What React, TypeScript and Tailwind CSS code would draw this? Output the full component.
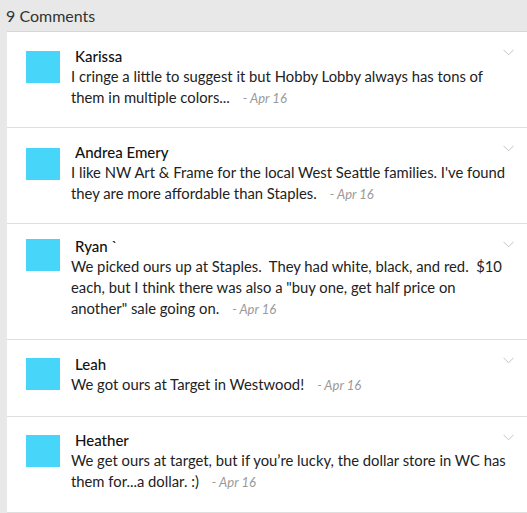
import React from "react";

type C = {
  name: string;
  lines: string[];
  pt: string;
  pb: string;
  am: string;
};

const comments: C[] = [
  {
    name: "Karissa",
    lines: [
      "I cringe a little to suggest it but Hobby Lobby always has tons of",
      "them in multiple colors...",
    ],
    pt: "pt-[14px]",
    pb: "pb-[19px]",
    am: "mt-[5px]",
  },
  {
    name: "Andrea Emery",
    lines: [
      "I like NW Art & Frame for the local West Seattle families. I've found",
      "they are more affordable than Staples.",
    ],
    pt: "pt-[14px]",
    pb: "pb-[19px]",
    am: "mt-[6px]",
  },
  {
    name: "Ryan `",
    lines: [
      "We picked ours up at Staples.\u00a0 They had white, black, and red.\u00a0 $10",
      'each, but I think there was also a "buy one, get half price on',
      'another" sale going on.',
    ],
    pt: "pt-[12px]",
    pb: "pb-[20px]",
    am: "mt-[3px]",
  },
  {
    name: "Leah",
    lines: ["We got ours at Target in Westwood!"],
    pt: "pt-[14px]",
    pb: "pb-[21px]",
    am: "mt-[4px]",
  },
  {
    name: "Heather",
    lines: [
      "We get ours at target, but if you\u2019re lucky, the dollar store in WC has",
      "them for...a dollar. :)",
    ],
    pt: "pt-[13px]",
    pb: "pb-[20px]",
    am: "mt-[5px]",
  },
];

function Chevron() {
  return (
    <svg
      className="absolute top-[17px] right-[13px]"
      width="11"
      height="7"
      viewBox="0 0 11 7"
      fill="none"
    >
      <path d="M0.5 0.8 L5.5 5.8 L10.5 0.8" stroke="#c4c4c4" strokeWidth="1" />
    </svg>
  );
}

export default function App() {
  return (
    <div className="w-[527px] h-[513px] overflow-hidden bg-[#e8e8e8] font-['Lato','Noto_Sans',sans-serif] text-[#222]">
      <div className="h-[31px] pl-[6px] flex items-center text-[16px] text-[#333] leading-none">
        9 Comments
      </div>
      <div className="ml-[7px] bg-white border-t border-[#d6d6d6]">
        {comments.map((c, i) => (
          <div
            key={i}
            className={`relative flex pl-[19px] border-b border-[#dedede] ${c.pt} ${c.pb}`}
          >
            <div className={`w-[34px] h-[32px] bg-[#47d6f9] shrink-0 ${c.am}`} />
            <div className="ml-[11px] flex flex-col">
              <div className="pl-[4px] h-[20px] text-[15px] leading-[20px] font-medium text-[#111]">
                {c.name}
              </div>
              {c.lines.map((l, j) => (
                <div key={j} className="h-[21px] text-[14.8px] leading-[21px] whitespace-nowrap">
                  {l}
                  {j === c.lines.length - 1 && (
                    <span className="ml-[13px] text-[13px] leading-none italic text-[#9a9a9a]">- Apr 16</span>
                  )}
                </div>
              ))}
            </div>
            <Chevron />
          </div>
        ))}
      </div>
    </div>
  );
}
